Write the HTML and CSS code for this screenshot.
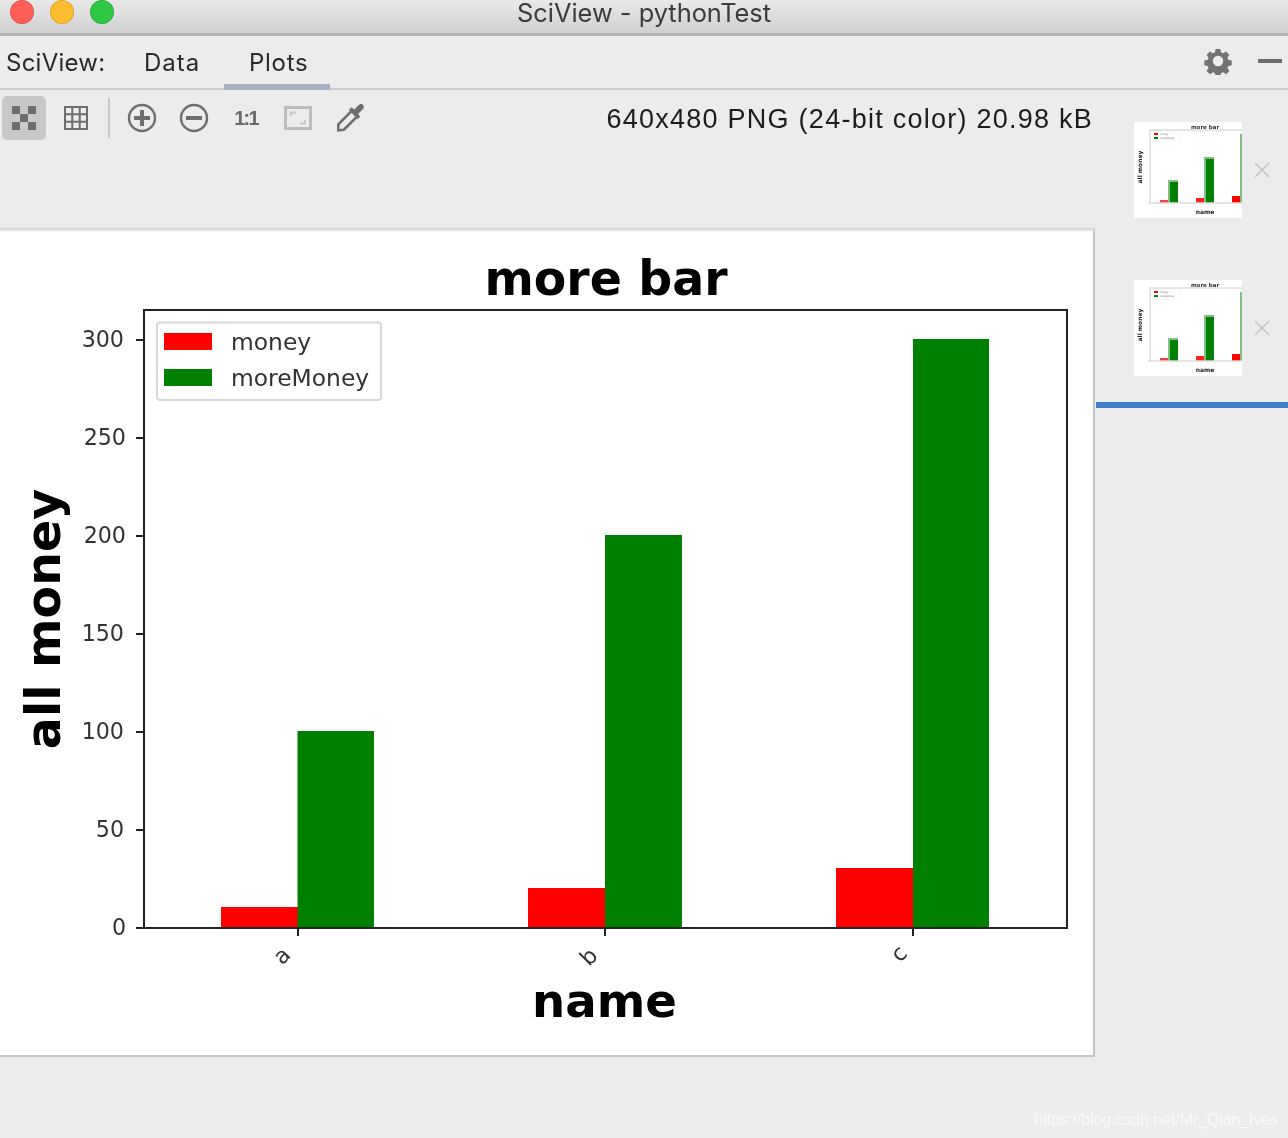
FILE: index.html
```html
<!DOCTYPE html>
<html lang="en">
<head>
<meta charset="utf-8">
<title>SciView - pythonTest</title>
<link rel="stylesheet" href="styles.css">
</head>
<body>
<div class="app">
  <header class="titlebar">
    <div class="lights">
      <span class="light red"></span>
      <span class="light yellow"></span>
      <span class="light green"></span>
    </div>
    <div class="window-title">SciView - pythonTest</div>
  </header>

  <nav class="tabs">
    <span class="tab-label">SciView:</span>
    <span class="tab">Data</span>
    <span class="tab active">Plots</span>
    <div class="tab-actions">
      <svg class="gear" viewBox="0 0 28 28" width="28" height="28">
        <path fill="#727272" fill-rule="evenodd" d="M11.600 2h4.800l.7 3.400 2.100.9 2.900-1.900 3.300 3.400-1.900 2.900.8 2 3.400.7v4.800l-3.400.7-.8 2.100 1.900 2.900-3.300 3.300-2.900-1.900-2.100.8-.7 3.400h-4.800l-.7-3.400-2.100-.8-2.900 1.900-3.300-3.300 1.900-2.900-.8-2.100-3.400-.7v-4.800l3.400-.7.8-2-1.900-2.900 3.300-3.400 2.900 1.900 2.100-.9zM14 8.800a5.200 5.200 0 1 0 0 10.400 5.200 5.200 0 0 0 0-10.400z"/>
      </svg>
      <span class="dash"></span>
    </div>
  </nav>

  <main class="workspace">
    <section class="viewer">
      <div class="toolbar">
        <div class="tools">
          <span class="tool on">
            <svg viewBox="0 0 24 24" width="24" height="24"><path fill="#6e6e6e" d="M0 0h8v8H0zM16 0h8v8h-8zM8 8h8v8H8zM0 16h8v8H0zM16 16h8v8h-8z"/></svg>
          </span>
          <span class="tool">
            <svg viewBox="0 0 24 24" width="24" height="24"><path fill="none" stroke="#6e6e6e" stroke-width="2" d="M1 1h22v22H1zM1 8.300h22M1 15.700h22M8.300 1v22M15.700 1v22"/></svg>
          </span>
          <span class="sep"></span>
          <span class="tool">
            <svg viewBox="0 0 30 30" width="30" height="30"><circle cx="15" cy="15" r="13" fill="none" stroke="#6e6e6e" stroke-width="2.400"/><path stroke="#6e6e6e" stroke-width="4" d="M7 15h16M15 7v16"/></svg>
          </span>
          <span class="tool">
            <svg viewBox="0 0 30 30" width="30" height="30"><circle cx="15" cy="15" r="13" fill="none" stroke="#6e6e6e" stroke-width="2.400"/><path stroke="#6e6e6e" stroke-width="4" d="M7 15h16"/></svg>
          </span>
          <span class="tool ratio">1:1</span>
          <span class="tool">
            <svg viewBox="0 0 28 24" width="28" height="24"><path fill="none" stroke="#bcbcbc" stroke-width="3" d="M1.500 1.500h25v21h-25z"/><path fill="none" stroke="#c8c8c8" stroke-width="2" d="M7 10V6.500h5M21 14v3.500h-5"/></svg>
          </span>
          <span class="tool pick">
            <svg viewBox="2 1 25 25.500" width="28" height="28"><path fill="none" stroke="#6e6e6e" stroke-width="2.400" d="M15 7.500 3 19.500l-.5 5.500 5.500-.5 12-12"/><path fill="#6e6e6e" d="M12.500 6.500l2.500-2.500 2.500 2 4-4c1.500-1.500 3-1.500 4 0s1 2.500-.5 4l-4 4 2 2.500-2.500 2.500z"/></svg>
          </span>
        </div>
        <div class="image-info">640x480 PNG (24-bit color) 20.98 kB</div>
      </div>

      <div class="plot-frame">
        <svg class="plot" viewBox="0 231 1093 824" width="1093" height="824">
          <g class="bars">
            <rect x="221" y="907" width="77" height="21" fill="#ff0000"/>
            <rect x="528" y="888" width="77" height="40" fill="#ff0000"/>
            <rect x="836" y="868" width="77" height="60" fill="#ff0000"/>
            <rect x="297.500" y="731" width="76.500" height="197" fill="#008000"/>
            <rect x="605" y="535" width="77" height="393" fill="#008000"/>
            <rect x="913" y="339" width="76" height="589" fill="#008000"/>
          </g>
          <rect x="144" y="310" width="923" height="618" fill="none" stroke="#222" stroke-width="2"/>
          <path stroke="#222" stroke-width="2" d="M136 928h8M136 830h8M136 732h8M136 634h8M136 536h8M136 438h8M136 340h8M298 928v8M605 928v8M913 928v8"/>
          <g class="ticks">
            <text x="126" y="935">0</text>
            <text x="124" y="837">50</text>
            <text x="124" y="739">100</text>
            <text x="124" y="641">150</text>
            <text x="126" y="543">200</text>
            <text x="126" y="445">250</text>
            <text x="124" y="347">300</text>
          </g>
          <g class="xticks">
            <text transform="translate(282 956) rotate(-45)" y="7">a</text>
            <text transform="translate(589 957) rotate(-45)" y="7">b</text>
            <text transform="translate(899 954) rotate(-45)" y="7">c</text>
          </g>
          <rect x="157" y="322.500" width="224" height="77.500" rx="3" fill="#fff" stroke="#d8d8d8" stroke-width="2"/>
          <rect x="164" y="333" width="48" height="17" fill="#ff0000"/>
          <rect x="164" y="369" width="48" height="17" fill="#008000"/>
          <text class="legend" x="231" y="350">money</text>
          <text class="legend" x="231" y="386">moreMoney</text>
          <text class="title" x="606" y="295">more bar</text>
          <text class="axis-name" x="604.500" y="1017">name</text>
          <text class="axis-label" transform="translate(60 619) rotate(-90)">all money</text>
        </svg>
      </div>
    </section>

    <aside class="thumbs">
      <div class="thumb-row">
        <svg class="thumb" viewBox="0 0 108 96" width="108" height="96">
          <rect width="108" height="96" fill="#fff"/>
          <rect x="26" y="78" width="10" height="3" fill="#f04040"/>
          <rect x="34" y="58" width="10" height="23" fill="#80c080"/>
          <rect x="36" y="60" width="8" height="21" fill="#008000"/>
          <rect x="62" y="76" width="9" height="5" fill="#ff2020"/>
          <rect x="70" y="35" width="10" height="46" fill="#80c080"/>
          <rect x="72" y="37" width="8" height="44" fill="#008000"/>
          <rect x="98" y="74" width="10" height="7" fill="#ff0000"/>
          <rect x="106" y="12" width="2" height="69" fill="#80c080"/>
          <path fill="none" stroke="#dcdcdc" stroke-width="1.500" d="M16 81V8h92M14 81h94"/>
          <rect x="18" y="10" width="28" height="9" fill="#fff" stroke="#f0f0f0" stroke-width=".5"/>
          <rect x="20" y="11" width="4" height="2" fill="#ff0000"/>
          <rect x="20" y="15" width="4" height="2" fill="#008000"/>
          <text class="t-legend" x="26" y="13">money</text>
          <text class="t-legend" x="26" y="17">moreMoney</text>
          <text class="t-title" x="71" y="7">more bar</text>
          <text class="t-label" x="71" y="92">name</text>
          <text class="t-label" transform="translate(8 45) rotate(-90)">all money</text>
        </svg>
        <svg class="close" viewBox="0 0 16 16" width="16" height="16"><path stroke="#c0c5c9" stroke-width="1.500" d="M1 1l14 14M15 1 1 15"/></svg>
      </div>
      <div class="thumb-row">
        <svg class="thumb" viewBox="0 0 108 96" width="108" height="96">
          <rect width="108" height="96" fill="#fff"/>
          <rect x="26" y="78" width="10" height="3" fill="#f04040"/>
          <rect x="34" y="58" width="10" height="23" fill="#80c080"/>
          <rect x="36" y="60" width="8" height="21" fill="#008000"/>
          <rect x="62" y="76" width="9" height="5" fill="#ff2020"/>
          <rect x="70" y="35" width="10" height="46" fill="#80c080"/>
          <rect x="72" y="37" width="8" height="44" fill="#008000"/>
          <rect x="98" y="74" width="10" height="7" fill="#ff0000"/>
          <rect x="106" y="12" width="2" height="69" fill="#80c080"/>
          <path fill="none" stroke="#dcdcdc" stroke-width="1.500" d="M16 81V8h92M14 81h94"/>
          <rect x="18" y="10" width="28" height="9" fill="#fff" stroke="#f0f0f0" stroke-width=".5"/>
          <rect x="20" y="11" width="4" height="2" fill="#ff0000"/>
          <rect x="20" y="15" width="4" height="2" fill="#008000"/>
          <text class="t-legend" x="26" y="13">money</text>
          <text class="t-legend" x="26" y="17">moreMoney</text>
          <text class="t-title" x="71" y="7">more bar</text>
          <text class="t-label" x="71" y="92">name</text>
          <text class="t-label" transform="translate(8 45) rotate(-90)">all money</text>
        </svg>
        <svg class="close" viewBox="0 0 16 16" width="16" height="16"><path stroke="#c0c5c9" stroke-width="1.500" d="M1 1l14 14M15 1 1 15"/></svg>
      </div>
      <div class="thumb-bar"></div>
    </aside>
  </main>
  <div class="watermark">https://blog.csdn.net/Mr_Qian_Ives</div>
</div>
</body>
</html>
```

FILE: styles.css
```css
* { box-sizing: border-box; }
html, body { margin: 0; padding: 0; }
body {
  background: #ececec;
  font-family: Inter, "Liberation Sans", sans-serif;
  color: #2a2a2a;
  overflow: hidden;
}
.app {
  position: relative;
  width: 1288px;
  height: 1138px;
  display: flex;
  flex-direction: column;
  filter: blur(.35px);
}
.titlebar {
  position: relative;
  height: 36px;
  flex: none;
  background: linear-gradient(#e9e9e9, #d0d0d0);
  border-bottom: 3px solid #b4b4b4;
}
.lights {
  display: flex;
  gap: 16px;
  padding-left: 10px;
}
.light {
  width: 24px;
  height: 24px;
  border-radius: 50%;
  border: 1px solid rgba(0, 0, 0, .12);
}
.red { background: #ff5f57; }
.yellow { background: #febc2e; }
.green { background: #2fc845; }
.window-title {
  position: absolute;
  left: 0;
  right: 0;
  top: 0;
  text-align: center;
  font-size: 25.400px;
  line-height: 26px;
  color: #3c3c3c;
}
.tabs {
  height: 54px;
  flex: none;
  display: flex;
  align-items: center;
  border-bottom: 2px solid #cfcfcf;
  font-size: 24px;
  padding-left: 6px;
}
.tab-label {
  width: 112px;
  flex: none;
  letter-spacing: .25px;
}
.tab {
  flex: none;
  width: 106px;
  height: 54px;
  margin-bottom: -2px;
  padding-left: 26px;
  line-height: 54px;
  letter-spacing: 1px;
}
.tab.active {
  padding-left: 25px;
  letter-spacing: .7px;
  border-bottom: 6px solid #a7b2c3;
}
.tab-actions {
  margin-left: auto;
  display: flex;
  align-items: center;
  gap: 26px;
  padding-right: 6px;
  margin-top: -2px;
}
.gear { display: block; }
.dash {
  width: 24px;
  height: 4px;
  background: #6e6e6e;
}
.workspace {
  flex: none;
  display: flex;
  align-items: flex-start;
}
.viewer {
  width: 1096px;
  flex: none;
}
.toolbar {
  height: 139px;
  display: flex;
  align-items: flex-start;
  justify-content: space-between;
  padding: 6px 3px 0 2px;
}
.tools {
  display: flex;
  align-items: center;
  gap: 8px;
}
.tool {
  width: 44px;
  height: 44px;
  flex: none;
  display: flex;
  align-items: center;
  justify-content: center;
  border-radius: 5px;
}
.tool.on { background: #c8c8c8; }
.tool.pick { padding-left: 2px; }
.tool svg { display: block; }
.sep {
  width: 2px;
  height: 40px;
  background: #c9c9c9;
  margin: 0 2px 0 2px;
  flex: none;
}
.ratio {
  font-weight: 700;
  font-family: "Liberation Sans", sans-serif;
  font-size: 20px;
  letter-spacing: -1.800px;
  color: #686868;
}
.image-info {
  font-size: 27px;
  line-height: 30px;
  padding-top: 8px;
  letter-spacing: 1.250px;
  color: #1c1c1c;
  font-family: "Liberation Sans", sans-serif;
}
.plot-frame {
  width: 1095px;
  height: 828px;
  background: #fff;
  border-top: 2px solid #e6e6e6;
  border-right: 2px solid #c4c4c4;
  border-bottom: 2px solid #c4c4c4;
  box-shadow: 0 -1px 0 #d0d0d0;
}
.plot { display: block; }
.plot text { font-family: "DejaVu Sans", sans-serif; }
.ticks text { font-size: 22.200px; fill: #333; text-anchor: end; }
.xticks text { font-size: 22.200px; fill: #333; text-anchor: middle; }
.plot .legend { font-size: 23.400px; fill: #333; }
.plot .title { font-size: 47.400px; font-weight: 700; text-anchor: middle; fill: #000; }
.plot .axis-name { font-size: 46.600px; font-weight: 700; text-anchor: middle; fill: #000; }
.plot .axis-label { font-size: 47.500px; font-weight: 700; text-anchor: middle; fill: #000; }
.thumbs {
  flex: 1;
  padding-top: 32px;
  display: flex;
  flex-direction: column;
}
.thumb-row {
  height: 96px;
  margin-bottom: 62px;
  padding-left: 38px;
  display: flex;
  align-items: flex-start;
  gap: 12px;
  flex: none;
}
.thumb-row + .thumb-row { margin-bottom: 26px; }
.thumb { display: block; flex: none; filter: blur(.35px); }
.close { display: block; margin-top: 40px; flex: none; }
.thumb-bar {
  height: 6px;
  background: #3f7fc6;
}
.thumb text { font-family: "DejaVu Sans", sans-serif; }
.thumb .t-legend { font-size: 2.500px; fill: #777; }
.thumb .t-title { font-size: 5.500px; font-weight: 700; fill: #333; text-anchor: middle; }
.thumb .t-label { font-size: 6px; font-weight: 700; fill: #222; text-anchor: middle; }
.watermark {
  position: absolute;
  right: 10px;
  bottom: 9px;
  font-family: "Liberation Sans", sans-serif;
  font-size: 15.800px;
  color: rgba(255, 255, 255, .65);
}
```
